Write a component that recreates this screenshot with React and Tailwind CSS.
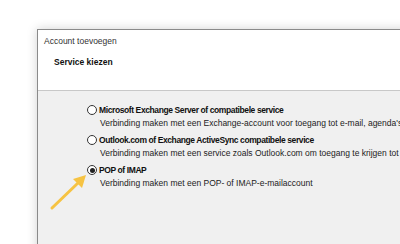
import React from "react";

function Option({ checked, title, desc }) {
  return (
    <div className="flex flex-col">
      <div className="flex items-center gap-[2px] h-[14px]">
        <span className="w-[10px] h-[10px] rounded-full border border-[#333] bg-white flex items-center justify-center">
          {checked && <span className="w-[5px] h-[5px] rounded-full bg-[#222]" />}
        </span>
        <span className="font-bold text-[#111] tracking-[-0.4px]">{title}</span>
      </div>
      <div className="pl-[13px] h-[13px] leading-[13px] text-[#222]">{desc}</div>
    </div>
  );
}

export default function App() {
  return (
    <main
      className="relative w-[400px] h-[244px] bg-white overflow-hidden text-[8.5px] whitespace-nowrap"
      style={{ fontFamily: '"Liberation Sans", Arial, sans-serif' }}
    >
      <div className="absolute left-[37px] top-[29px] w-[400px] h-[240px] border-l border-t border-[#8a8a8a] shadow-[0_0_10px_rgba(0,0,0,0.18)] flex flex-col">
        <div className="bg-white h-[61px] border-b border-[#c8c8c8] flex flex-col">
          <div className="pl-[6px] pt-[5px] text-[#333] leading-[12px]">Account toevoegen</div>
          <div className="pl-[16px] pt-[9px] font-bold text-[#111] leading-[12px]">Service kiezen</div>
        </div>
        <div className="flex-1 bg-[#f0f0f0] pl-[49px] pt-[12px] flex flex-col gap-[3px]">
          <Option
            title="Microsoft Exchange Server of compatibele service"
            desc="Verbinding maken met een Exchange-account voor toegang tot e-mail, agenda's, contactpersonen"
          />
          <Option
            title="Outlook.com of Exchange ActiveSync compatibele service"
            desc="Verbinding maken met een service zoals Outlook.com om toegang te krijgen tot e-mail"
          />
          <Option checked title="POP of IMAP" desc="Verbinding maken met een POP- of IMAP-e-mailaccount" />
        </div>
      </div>
      <svg className="absolute left-0 top-0" width="400" height="244" viewBox="0 0 400 244">
        <line x1="52" y1="208" x2="78" y2="183" stroke="#f6c343" strokeWidth="3" strokeLinecap="round" />
        <polygon points="86,175 73,179 82,188" fill="#f6c343" />
      </svg>
    </main>
  );
}
